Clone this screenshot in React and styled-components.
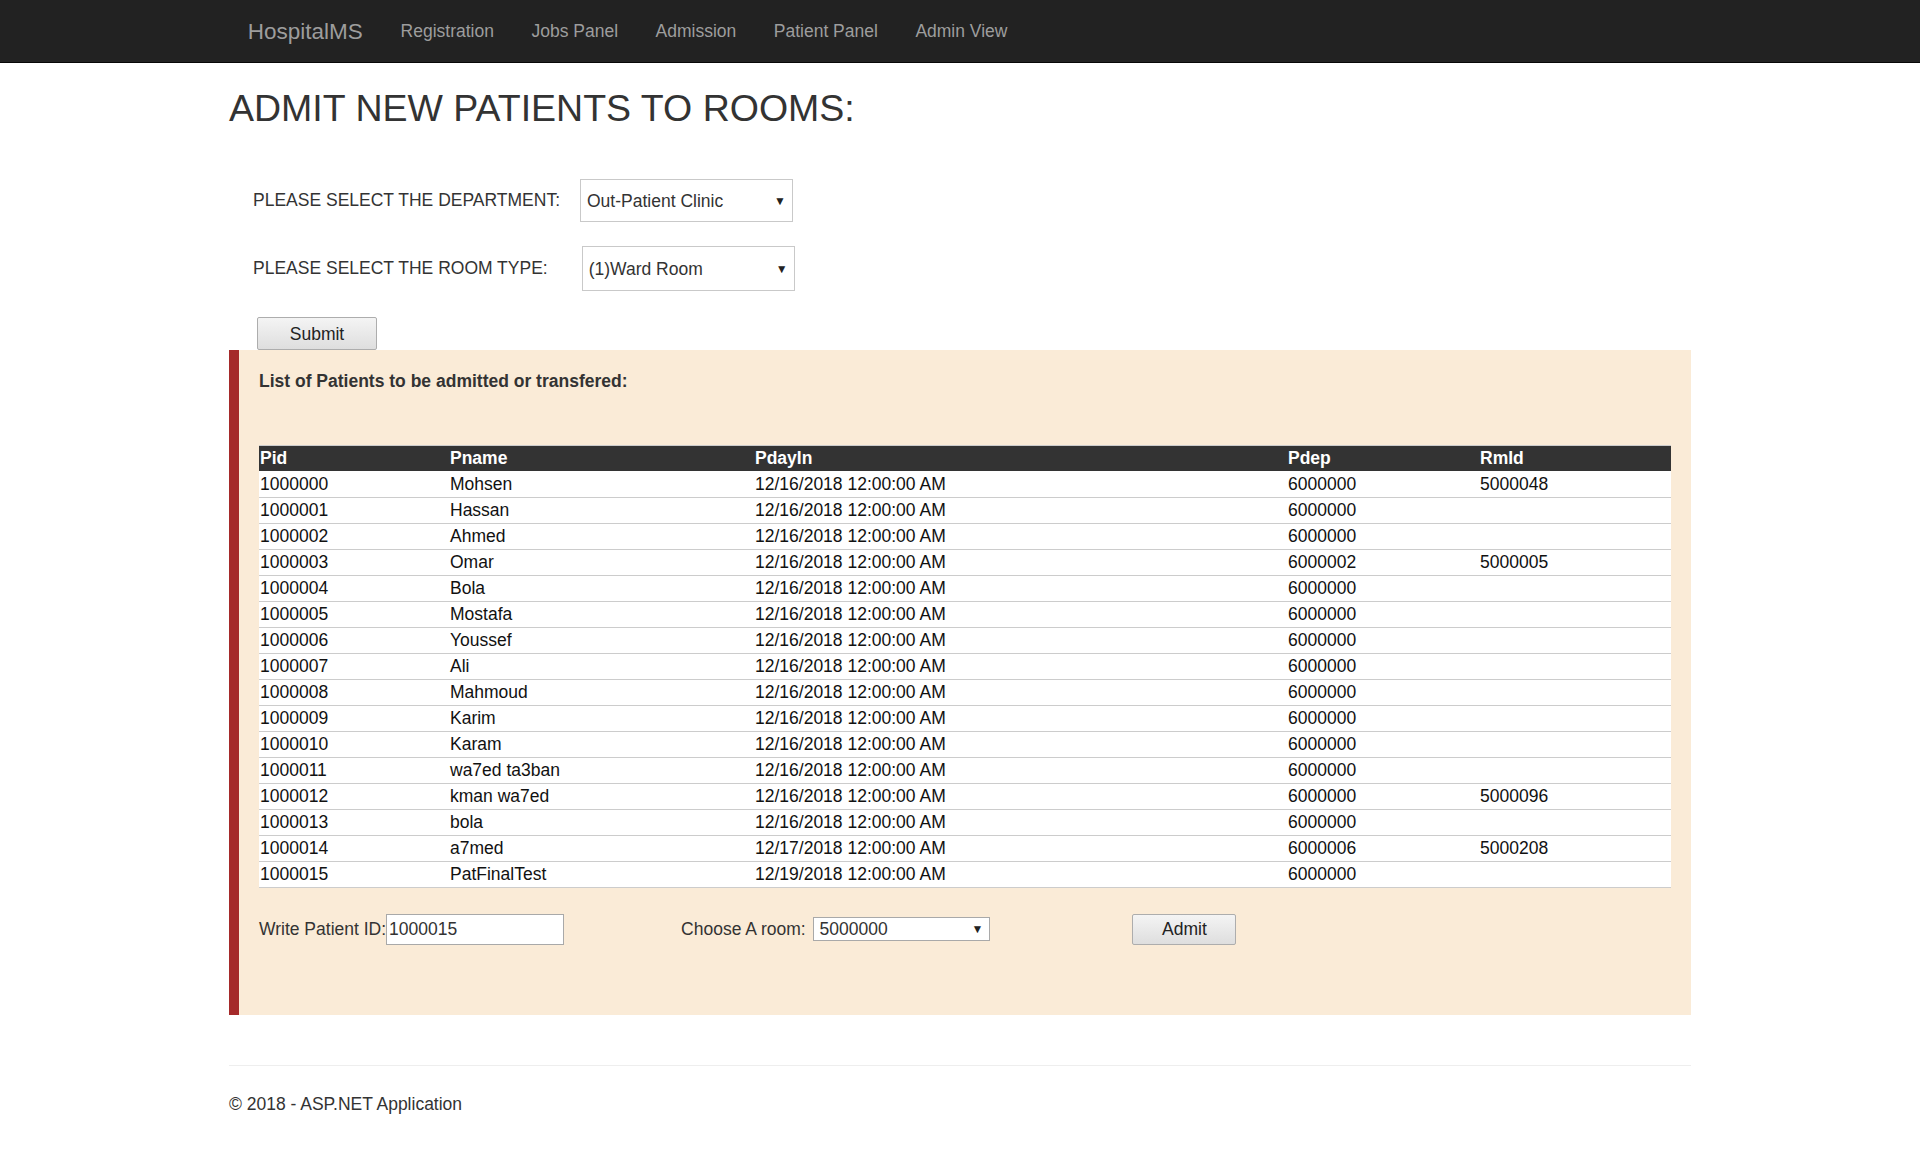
import React from 'react';
import styled, {createGlobalStyle} from 'styled-components';

const GlobalStyle = createGlobalStyle`
    html, body {
        margin:0;
        padding:0;
        background:#fff;
    }
    body {
        font-family:"Liberation Sans", Arial, Helvetica, sans-serif;
        font-size:17.5px;
        line-height:25px;
        color:#333;
    }
    * { box-sizing:border-box; }
`

const NavBar = styled.div`
    height:63px;
    background-color:#222;
    border-bottom:1px solid #080808;
`
const NavInner = styled.div`
    width:1462px;
    margin:0 auto;
    padding:0 18.75px;
    display:flex;
    align-items:center;
    height:62px;
`
const Brand = styled.a`
    font-size:22.5px;
    line-height:25px;
    color:#9d9d9d;
    text-decoration:none;
    padding:18.5px 19px 18.5px 0;
`
const NavLink = styled.a`
    font-size:17.5px;
    line-height:25px;
    color:#9d9d9d;
    text-decoration:none;
    padding:18.5px 18.75px;
`
const Container = styled.div`
    width:1462px;
    margin:0 auto;
`
const Title = styled.h2`
    font-size:37.5px;
    line-height:41px;
    font-weight:500;
    margin:25px 0 12px;
    color:#333;
`
const FormArea = styled.div`
    padding-left:24px;
    display:flex;
    flex-direction:column;
    align-items:flex-start;
`
const FieldRow = styled.div`
    display:flex;
    align-items:center;
    gap:${props => props.gap || '20px'};
    margin-top:${props => props.top || '0'};
`
const FieldLabel = styled.span`
    color:#333;
`
const SelectWrap = styled.div`
    position:relative;
    width:${props => props.width || '213px'};
    height:${props => props.height || '43px'};
`
const NativeSelect = styled.select`
    appearance:none;
    -webkit-appearance:none;
    width:100%;
    height:100%;
    border:1px solid ${props => props.border || '#c9c9c9'};
    background:#fff;
    color:#333;
    font-family:inherit;
    font-size:17.5px;
    padding:${props => props.pad || '0 0 0 6px'};
    margin:0;
    border-radius:0;
    outline:none;
`
const Caret = styled.span`
    position:absolute;
    right:${props => props.right || '7px'};
    top:50%;
    transform:translateY(-50%);
    font-size:12px;
    line-height:12px;
    color:#222;
    pointer-events:none;
`
const Button = styled.button`
    font-family:inherit;
    font-size:17.5px;
    line-height:20px;
    color:#222;
    width:${props => props.width || '120px'};
    height:${props => props.height || '33px'};
    border:1px solid #adadad;
    border-radius:2px;
    background:linear-gradient(#f4f4f4, #dedede);
    margin-left:${props => props.left || '0'};
    margin-top:${props => props.top || '0'};
    padding:0;
`
const Panel = styled.div`
    background-color:#faebd7;
    border-left:10px solid #a52a2a;
    height:665px;
    padding:18.5px 20px 0 20px;
`
const PanelTitle = styled.div`
    font-weight:bold;
    color:#333;
`
const Grid = styled.table`
    border-collapse:collapse;
    width:1412px;
    margin-top:51px;
    color:#111;
    table-layout:fixed;
`
const HeadCell = styled.th`
    background-color:#333;
    color:#fff;
    font-weight:bold;
    text-align:left;
    height:26px;
    padding:0 0 0 1px;
    border-top:1px solid #ccc;
    line-height:24px;
`
const Cell = styled.td`
    background-color:#fff;
    height:26px;
    padding:0 0 0 1px;
    border-bottom:1px solid #ccc;
    line-height:24px;
    white-space:nowrap;
`
const ActionRow = styled.div`
    display:flex;
    align-items:center;
    margin-top:26px;
    height:31px;
`
const TextInput = styled.input`
    width:178px;
    height:31px;
    border:1px solid #a9a9a9;
    font-family:inherit;
    font-size:17.5px;
    color:#333;
    padding:0 2px;
    margin:0;
    outline:none;
`
const Spacer = styled.span`
    display:inline-block;
    width:${props => props.w};
`
const Footer = styled.footer`
    margin-top:50px;
    border-top:1px solid #eee;
    padding-top:26px;
    color:#333;
`

const columns = [
    {key:'pid', title:'Pid', width:'190px'},
    {key:'pname', title:'Pname', width:'305px'},
    {key:'day', title:'PdayIn', width:'533px'},
    {key:'pdep', title:'Pdep', width:'192px'},
    {key:'rm', title:'RmId', width:'192px'},
]

const patients = [
    ['1000000', 'Mohsen', '12/16/2018 12:00:00 AM', '6000000', '5000048'],
    ['1000001', 'Hassan', '12/16/2018 12:00:00 AM', '6000000', ''],
    ['1000002', 'Ahmed', '12/16/2018 12:00:00 AM', '6000000', ''],
    ['1000003', 'Omar', '12/16/2018 12:00:00 AM', '6000002', '5000005'],
    ['1000004', 'Bola', '12/16/2018 12:00:00 AM', '6000000', ''],
    ['1000005', 'Mostafa', '12/16/2018 12:00:00 AM', '6000000', ''],
    ['1000006', 'Youssef', '12/16/2018 12:00:00 AM', '6000000', ''],
    ['1000007', 'Ali', '12/16/2018 12:00:00 AM', '6000000', ''],
    ['1000008', 'Mahmoud', '12/16/2018 12:00:00 AM', '6000000', ''],
    ['1000009', 'Karim', '12/16/2018 12:00:00 AM', '6000000', ''],
    ['1000010', 'Karam', '12/16/2018 12:00:00 AM', '6000000', ''],
    ['1000011', 'wa7ed ta3ban', '12/16/2018 12:00:00 AM', '6000000', ''],
    ['1000012', 'kman wa7ed', '12/16/2018 12:00:00 AM', '6000000', '5000096'],
    ['1000013', 'bola', '12/16/2018 12:00:00 AM', '6000000', ''],
    ['1000014', 'a7med', '12/17/2018 12:00:00 AM', '6000006', '5000208'],
    ['1000015', 'PatFinalTest', '12/19/2018 12:00:00 AM', '6000000', ''],
]

const App = () => {
    return (
        <>
            <GlobalStyle/>
            <NavBar>
                <NavInner>
                    <Brand href="#">HospitalMS</Brand>
                    <NavLink href="#">Registration</NavLink>
                    <NavLink href="#">Jobs Panel</NavLink>
                    <NavLink href="#">Admission</NavLink>
                    <NavLink href="#">Patient Panel</NavLink>
                    <NavLink href="#">Admin View</NavLink>
                </NavInner>
            </NavBar>
            <Container>
                <Title>ADMIT NEW PATIENTS TO ROOMS:</Title>
                <FormArea>
                    <FieldRow top="38px" gap="20px">
                        <FieldLabel>PLEASE SELECT THE DEPARTMENT:</FieldLabel>
                        <SelectWrap width="213px" height="43px">
                            <NativeSelect defaultValue="opc">
                                <option value="opc">Out-Patient Clinic</option>
                            </NativeSelect>
                            <Caret>▼</Caret>
                        </SelectWrap>
                    </FieldRow>
                    <FieldRow top="24px" gap="34px">
                        <FieldLabel>PLEASE SELECT THE ROOM TYPE:</FieldLabel>
                        <SelectWrap width="213px" height="45px">
                            <NativeSelect defaultValue="ward">
                                <option value="ward">(1)Ward Room</option>
                            </NativeSelect>
                            <Caret>▼</Caret>
                        </SelectWrap>
                    </FieldRow>
                    <Button top="26px" left="4px">Submit</Button>
                </FormArea>
                <Panel>
                    <PanelTitle>List of Patients to be admitted or transfered:</PanelTitle>
                    <Grid>
                        <colgroup>
                            {columns.map(c => <col key={c.key} style={{width:c.width}}/>)}
                        </colgroup>
                        <thead>
                            <tr>{columns.map(c => <HeadCell key={c.key}>{c.title}</HeadCell>)}</tr>
                        </thead>
                        <tbody>
                            {patients.map(row => (
                                <tr key={row[0]}>
                                    {row.map((v, i) => <Cell key={i}>{v}</Cell>)}
                                </tr>
                            ))}
                        </tbody>
                    </Grid>
                    <ActionRow>
                        <FieldLabel>Write Patient ID:</FieldLabel>
                        <TextInput defaultValue="1000015"/>
                        <Spacer w="117px"/>
                        <FieldLabel>Choose A room:&nbsp;</FieldLabel>
                        <Spacer w="3px"/>
                        <SelectWrap width="177px" height="24px">
                            <NativeSelect defaultValue="5000000" border="#a9a9a9" pad="0 0 0 5px">
                                <option value="5000000">5000000</option>
                            </NativeSelect>
                            <Caret right="7px">▼</Caret>
                        </SelectWrap>
                        <Spacer w="142px"/>
                        <Button width="104px" height="31px">Admit</Button>
                    </ActionRow>
                </Panel>
                <Footer>© 2018 - ASP.NET Application</Footer>
            </Container>
        </>
    )
}

export default App
